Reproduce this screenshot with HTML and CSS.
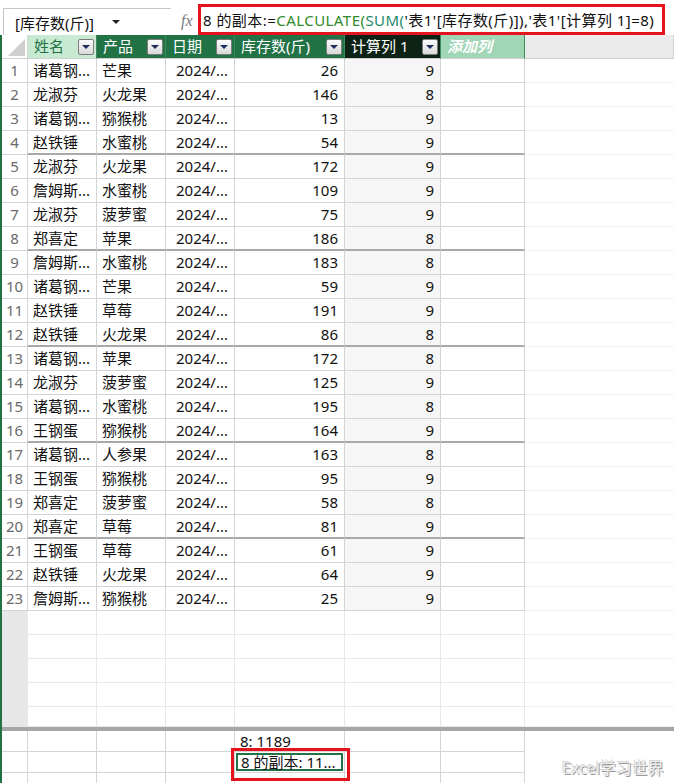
FILE: index.html
```html
<!DOCTYPE html>
<html lang="zh-CN">
<head>
    <meta charset="UTF-8">
    <title>Power Pivot</title>
    <link rel="stylesheet" href="styles.css">
</head>
<body>
    <div class="top-strip"></div>

    <!-- barra de fórmula -->
    <div class="formula-bar">
        <div class="name-box">
            <span class="name-text">[库存数(斤)]</span>
            <span class="name-arrow"></span>
        </div>
        <div class="fx">fx</div>
        <div class="formula">8 的副本:=<span class="fn">CALCULATE(</span><span class="fn2">SUM(</span>'表1'[库存数(斤)]),'表1'[计算列 1]=8)</div>
    </div>

    <div class="sheet">
        <div class="row head">
            <span class="corner"></span>
            <span class="h h-sel">姓名<i class="dd"></i></span>
            <span class="h">产品<i class="dd"></i></span>
            <span class="h">日期<i class="dd"></i></span>
            <span class="h">库存数(斤)<i class="dd"></i></span>
            <span class="h h-calc">计算列 1<i class="dd"></i></span>
            <span class="h h-add">添加列</span>
            <span class="h-fill"></span>
        </div>

        <div class="row"><span class="num">1</span><span class="cell">诸葛钢...</span><span class="cell">芒果</span><span class="cell r">2024/...</span><span class="cell r">26</span><span class="cell r calc">9</span><span class="cell"></span><span class="fill"></span></div>
        <div class="row"><span class="num">2</span><span class="cell">龙淑芬</span><span class="cell">火龙果</span><span class="cell r">2024/...</span><span class="cell r">146</span><span class="cell r calc">8</span><span class="cell"></span><span class="fill"></span></div>
        <div class="row"><span class="num">3</span><span class="cell">诸葛钢...</span><span class="cell">猕猴桃</span><span class="cell r">2024/...</span><span class="cell r">13</span><span class="cell r calc">9</span><span class="cell"></span><span class="fill"></span></div>
        <div class="row end"><span class="num">4</span><span class="cell">赵铁锤</span><span class="cell">水蜜桃</span><span class="cell r">2024/...</span><span class="cell r">54</span><span class="cell r calc">9</span><span class="cell"></span><span class="fill"></span></div>
        <div class="row"><span class="num">5</span><span class="cell">龙淑芬</span><span class="cell">火龙果</span><span class="cell r">2024/...</span><span class="cell r">172</span><span class="cell r calc">9</span><span class="cell"></span><span class="fill"></span></div>
        <div class="row"><span class="num">6</span><span class="cell">詹姆斯...</span><span class="cell">水蜜桃</span><span class="cell r">2024/...</span><span class="cell r">109</span><span class="cell r calc">9</span><span class="cell"></span><span class="fill"></span></div>
        <div class="row"><span class="num">7</span><span class="cell">龙淑芬</span><span class="cell">菠萝蜜</span><span class="cell r">2024/...</span><span class="cell r">75</span><span class="cell r calc">9</span><span class="cell"></span><span class="fill"></span></div>
        <div class="row end"><span class="num">8</span><span class="cell">郑喜定</span><span class="cell">苹果</span><span class="cell r">2024/...</span><span class="cell r">186</span><span class="cell r calc">8</span><span class="cell"></span><span class="fill"></span></div>
        <div class="row"><span class="num">9</span><span class="cell">詹姆斯...</span><span class="cell">水蜜桃</span><span class="cell r">2024/...</span><span class="cell r">183</span><span class="cell r calc">8</span><span class="cell"></span><span class="fill"></span></div>
        <div class="row"><span class="num">10</span><span class="cell">诸葛钢...</span><span class="cell">芒果</span><span class="cell r">2024/...</span><span class="cell r">59</span><span class="cell r calc">9</span><span class="cell"></span><span class="fill"></span></div>
        <div class="row"><span class="num">11</span><span class="cell">赵铁锤</span><span class="cell">草莓</span><span class="cell r">2024/...</span><span class="cell r">191</span><span class="cell r calc">9</span><span class="cell"></span><span class="fill"></span></div>
        <div class="row end"><span class="num">12</span><span class="cell">赵铁锤</span><span class="cell">火龙果</span><span class="cell r">2024/...</span><span class="cell r">86</span><span class="cell r calc">8</span><span class="cell"></span><span class="fill"></span></div>
        <div class="row"><span class="num">13</span><span class="cell">诸葛钢...</span><span class="cell">苹果</span><span class="cell r">2024/...</span><span class="cell r">172</span><span class="cell r calc">8</span><span class="cell"></span><span class="fill"></span></div>
        <div class="row"><span class="num">14</span><span class="cell">龙淑芬</span><span class="cell">菠萝蜜</span><span class="cell r">2024/...</span><span class="cell r">125</span><span class="cell r calc">9</span><span class="cell"></span><span class="fill"></span></div>
        <div class="row"><span class="num">15</span><span class="cell">诸葛钢...</span><span class="cell">水蜜桃</span><span class="cell r">2024/...</span><span class="cell r">195</span><span class="cell r calc">8</span><span class="cell"></span><span class="fill"></span></div>
        <div class="row end"><span class="num">16</span><span class="cell">王钢蛋</span><span class="cell">猕猴桃</span><span class="cell r">2024/...</span><span class="cell r">164</span><span class="cell r calc">9</span><span class="cell"></span><span class="fill"></span></div>
        <div class="row"><span class="num">17</span><span class="cell">诸葛钢...</span><span class="cell">人参果</span><span class="cell r">2024/...</span><span class="cell r">163</span><span class="cell r calc">8</span><span class="cell"></span><span class="fill"></span></div>
        <div class="row"><span class="num">18</span><span class="cell">王钢蛋</span><span class="cell">猕猴桃</span><span class="cell r">2024/...</span><span class="cell r">95</span><span class="cell r calc">9</span><span class="cell"></span><span class="fill"></span></div>
        <div class="row"><span class="num">19</span><span class="cell">郑喜定</span><span class="cell">菠萝蜜</span><span class="cell r">2024/...</span><span class="cell r">58</span><span class="cell r calc">8</span><span class="cell"></span><span class="fill"></span></div>
        <div class="row end"><span class="num">20</span><span class="cell">郑喜定</span><span class="cell">草莓</span><span class="cell r">2024/...</span><span class="cell r">81</span><span class="cell r calc">9</span><span class="cell"></span><span class="fill"></span></div>
        <div class="row"><span class="num">21</span><span class="cell">王钢蛋</span><span class="cell">草莓</span><span class="cell r">2024/...</span><span class="cell r">61</span><span class="cell r calc">9</span><span class="cell"></span><span class="fill"></span></div>
        <div class="row"><span class="num">22</span><span class="cell">赵铁锤</span><span class="cell">火龙果</span><span class="cell r">2024/...</span><span class="cell r">64</span><span class="cell r calc">9</span><span class="cell"></span><span class="fill"></span></div>
        <div class="row"><span class="num">23</span><span class="cell">詹姆斯...</span><span class="cell">猕猴桃</span><span class="cell r">2024/...</span><span class="cell r">25</span><span class="cell r calc">9</span><span class="cell"></span><span class="fill"></span></div>

        <div class="row blank"><span class="num"></span><span class="cell"></span><span class="cell"></span><span class="cell"></span><span class="cell"></span><span class="cell"></span><span class="cell"></span><span class="fill"></span></div>
        <div class="row blank"><span class="num"></span><span class="cell"></span><span class="cell"></span><span class="cell"></span><span class="cell"></span><span class="cell"></span><span class="cell"></span><span class="fill"></span></div>
        <div class="row blank"><span class="num"></span><span class="cell"></span><span class="cell"></span><span class="cell"></span><span class="cell"></span><span class="cell"></span><span class="cell"></span><span class="fill"></span></div>
        <div class="row blank"><span class="num"></span><span class="cell"></span><span class="cell"></span><span class="cell"></span><span class="cell"></span><span class="cell"></span><span class="cell"></span><span class="fill"></span></div>
        <div class="row blank short"><span class="num"></span><span class="cell"></span><span class="cell"></span><span class="cell"></span><span class="cell"></span><span class="cell"></span><span class="cell"></span><span class="fill"></span></div>

        <div class="band"></div>

        <!-- área de medidas -->
        <div class="row measure"><span class="num"></span><span class="cell"></span><span class="cell"></span><span class="cell"></span><span class="cell">8: 1189</span><span class="cell"></span><span class="cell"></span><span class="fill"></span></div>
        <div class="row measure"><span class="num"></span><span class="cell"></span><span class="cell"></span><span class="cell"></span><span class="cell sel">8 的副本: 11...</span><span class="cell"></span><span class="cell"></span><span class="fill"></span></div>
        <div class="row measure"><span class="num"></span><span class="cell"></span><span class="cell"></span><span class="cell"></span><span class="cell"></span><span class="cell"></span><span class="cell"></span><span class="fill"></span></div>
    </div>

    <div class="mark"></div>
    <div class="watermark">Excel学习世界</div>
</body>
</html>
```

FILE: styles.css
```css
/* Reset */
* {
    margin: 0;
    padding: 0;
    box-sizing: border-box;
}

body {
    font-family: "Noto Sans", "Noto Sans CJK SC", sans-serif;
    font-size: 15px;
    color: #111;
    background-color: #fff;
    position: relative;
    width: 674px;
    height: 783px;
    overflow: hidden;
}

.top-strip {
    height: 4px;
    background-color: #fff;
}

/* Barra de fórmula */
.formula-bar {
    display: flex;
    height: 31px;
}

.name-box {
    width: 168px;
    margin-left: 3px;
    margin-top: 4px;
    border-top: 1px solid #c6c6c6;
    border-left: 1px solid #c6c6c6;
    display: flex;
    align-items: center;
    padding-left: 11px;
}

.name-text {
    width: 97px;
    white-space: nowrap;
}

.name-arrow {
    width: 0;
    height: 0;
    border-left: 4px solid transparent;
    border-right: 4px solid transparent;
    border-top: 4px solid #222;
}

.fx {
    width: 27px;
    font-family: "Liberation Serif", serif;
    font-style: italic;
    font-size: 16px;
    color: #7a7a7a;
    display: flex;
    align-items: center;
    padding-left: 10px;
    padding-top: 2px;
}

.formula {
    flex: 1;
    margin-right: 9px;
    border: 3px solid #e5131d;
    display: flex;
    align-items: center;
    padding-left: 2px;
    white-space: nowrap;
    overflow: hidden;
    color: #111;
    letter-spacing: 0.45px;
}

.fn {
    color: #2e8b27;
}

.fn2 {
    color: #1d8a6b;
}

/* Grade */
.sheet {
    border-left: 2px solid #217346;
}

.row {
    display: grid;
    grid-template-columns: 26px 69px 69px 69px 110px 96px 84px 1fr;
    height: 24px;
}

.row > span {
    border-bottom: 1px solid #d4d4d4;
    border-right: 1px solid #d4d4d4;
    white-space: nowrap;
    overflow: hidden;
    line-height: 23px;
}

.cell {
    padding: 0 6px 0 5px;
}

.cell.r {
    text-align: right;
}

.cell.calc {
    background-color: #f6f6f6;
}

.num {
    text-align: center;
    color: #6a6a6a;
}

.row > .fill {
    border-right: none;
    border-bottom-color: #f0f0f0;
}

.row.end > .cell {
    border-bottom: 2px solid #a9a9a9;
}

/* Cabeçalho */
.row.head > span {
    border-bottom: 1px solid #d0d0d0;
}

.corner {
    position: relative;
    background-color: #fff;
}

.corner::after {
    content: "";
    position: absolute;
    right: 2px;
    bottom: 2px;
    border-left: 17px solid transparent;
    border-bottom: 17px solid #cfcfcf;
}

.h {
    background-color: #217346;
    color: #fff;
    display: flex;
    align-items: center;
    justify-content: space-between;
    padding: 0 2px 0 6px;
}

.row.head > .h {
    border-right-color: #3a8a5c;
}

.h-sel {
    background-color: #c8ead3;
    color: #217346;
}

.h-calc {
    background-color: #0b2214;
}

.h-add {
    background-color: #a0d6b5;
    font-style: italic;
    font-weight: bold;
    justify-content: flex-start;
}

.h-fill {
    background-color: #ebebeb;
}

.dd {
    width: 16px;
    height: 16px;
    border: 1px solid #7c7c7c;
    border-radius: 2px;
    background: linear-gradient(#fdfdfd, #d9d9d9);
    display: flex;
    align-items: center;
    justify-content: center;
}

.dd::after {
    content: "";
    border-left: 4px solid transparent;
    border-right: 4px solid transparent;
    border-top: 4px solid #1f2d5c;
}

/* Linhas vazias */
.row.blank > span {
    border-color: #e8e8e8;
}

.row.blank > .num {
    background-color: #e7e7e7;
}

.row.blank > .fill {
    border-bottom-color: #f0f0f0;
}

.row.short {
    height: 20px;
}

.band {
    height: 4px;
    background-color: #a6a6a6;
}

/* Medidas */
.row.measure {
    height: 21px;
}

.row.measure > span {
    line-height: 20px;
}

.row.measure > .fill {
    border-bottom: none;
    border-left: 1px solid #d4d4d4;
    margin-left: -1px;
}

.cell.sel {
    box-shadow: inset 0 0 0 1px #fff, inset 0 0 0 3px #217346;
    padding-left: 6px;
}

/* Anotações */
.mark {
    position: absolute;
    left: 231px;
    top: 748px;
    width: 119px;
    height: 33px;
    border: 3px solid #e5131d;
}

.watermark {
    position: absolute;
    left: 562px;
    top: 755px;
    font-size: 16px;
    white-space: nowrap;
    color: #ececec;
    text-shadow: 1px 1px 0 #9a9a9a, -1px -1px 0 #d8d8d8;
}
```
